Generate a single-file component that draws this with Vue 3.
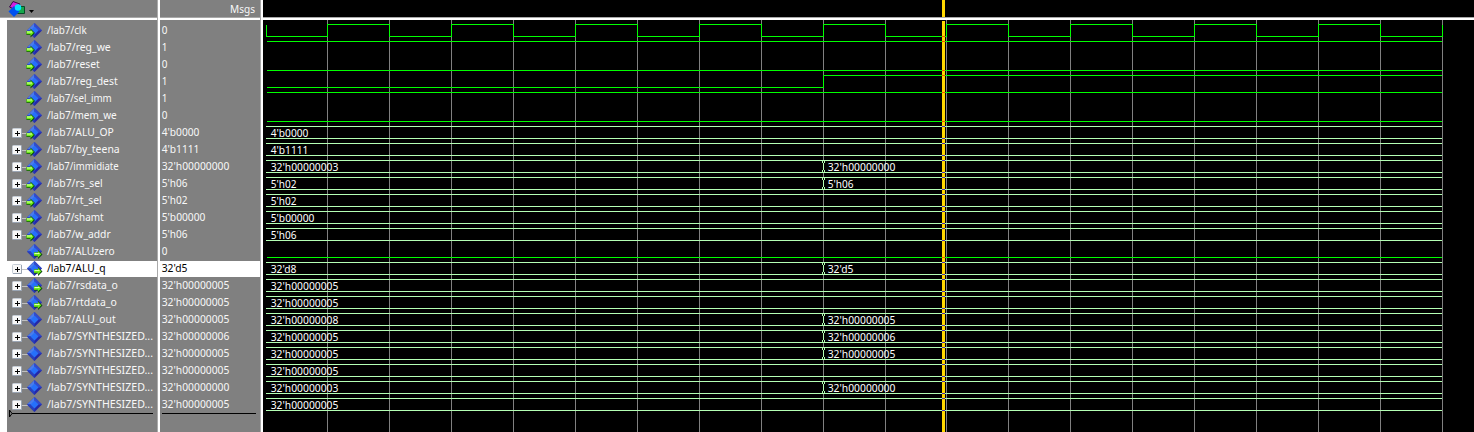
<script setup>
const inputs = [
  ['clk', '0'], ['reg_we', '1'], ['reset', '0'], ['reg_dest', '1'], ['sel_imm', '1'], ['mem_we', '0'],
  ['ALU_OP', "4'b0000"], ['by_teena', "4'b1111"], ['immidiate', "32'h00000000", "32'h00000003"],
  ['rs_sel', "5'h06", "5'h02"], ['rt_sel', "5'h02"], ['shamt', "5'b00000"], ['w_addr', "5'h06"],
].map(([name, value, before]) => ({ name, value, before, kind: 'in' }))
const outputs = [
  ['ALUzero', '0'], ['ALU_q', "32'd5", "32'd8"], ['rsdata_o', "32'h00000005"], ['rtdata_o', "32'h00000005"],
].map(([name, value, before]) => ({ name, value, before, kind: 'out' }))
const internals = [
  ['ALU_out', "32'h00000005", "32'h00000008"],
  ['SYNTHESIZED...', "32'h00000006", "32'h00000005"],
  ['SYNTHESIZED...', "32'h00000005", "32'h00000005"],
  ['SYNTHESIZED...', "32'h00000005"],
  ['SYNTHESIZED...', "32'h00000000", "32'h00000003"],
  ['SYNTHESIZED...', "32'h00000005"],
].map(([name, value, before]) => ({ name, value, before, kind: 'net' }))
const signals = [...inputs, ...outputs, ...internals].map((s, i) => ({
  ...s, path: '/lab7/' + s.name, bus: s.value.length > 1, selected: s.name === 'ALU_q', hi: 4 + 17 * i, lo: 16 + 17 * i,
}))
const buses = signals.filter(s => s.bus)

// Glyph advances in pixels for the 11px interface text.
const advances = {
  2: "'il", 3: '', 4: '/rtfI.', 5: 'ckszyL', 7: 'AUTNHD', 8: 'wmOM',
}
const advance = c => Number(Object.keys(advances).find(k => advances[k].includes(c)) || 6)
const measure = t => [...t].reduce((sum, c) => sum + advance(c), 0) - (t.endsWith('.') ? 2 : 0.3)

const edges = Array.from({ length: 19 }, (_, i) => 64 + i * 62 - (i > 9 ? 1 : 0))
const START = 3
const CHANGE = 560
const CURSOR = 679
const END = 1179
const clock = (() => {
  let d = `M${START + 0.5} 5V16.5`
  edges.forEach((x, i) => { d += `H${x + 0.5}V${i === 18 ? 5 : i % 2 ? 16.5 : 4.5}` })
  return d
})()
const wires = signals.slice(1).filter(s => !s.bus && s.name !== 'reg_dest').map(s => (s.value === '1' ? s.hi : s.lo))
const regDest = `M4 67.5H${CHANGE + 0.5}V55.5H${END}`
const greenCrossings = [16, ...wires, 55]
</script>

<template>
  <main class="viewer">
    <section class="pane names">
      <header class="bar">
        <svg width="40" height="17">
          <path d="M9.500 7L13 1.500L20 4L16 10Z" fill="#d020e0" stroke="#351044" />
          <path d="M17.500 6.500H24.500V13.500H17.500Z" fill="#16a84b" stroke="#084b28" />
          <path d="M8.500 11.500L14 6L19.500 11.500L14 17Z" fill="#0050f0" />
          <circle cx="18" cy="7.500" r="3.200" fill="#00e8ff" />
          <path d="M29 10H34L31.500 13Z" fill="#000" />
        </svg>
      </header>
      <div class="body">
        <div v-for="(s, i) in signals" :key="i" class="row" :class="{ selected: s.selected }">
          <svg width="150" height="17">
            <g v-if="s.bus">
              <path d="M15 9.500H21" class="branch" />
              <rect x="5.500" y="4.500" width="9" height="9" rx="1" fill="#f8f8f8" stroke="#c5ccd5" />
              <path d="M14.500 5V13.500H6" fill="none" stroke="#9aa5b4" />
              <path d="M8 9.500H13M10.500 7V12" stroke="#000" />
            </g>
            <path d="M20 8.500L27.500 1L35 8.500L27.500 16Z" fill="#2427a8" />
            <path d="M20 8.500L27.500 1V8.500Z" fill="#4b7cea" />
            <path d="M27.500 1L35 8.500H27.500Z" fill="#314ccc" />
            <path d="M20 8.500L27.500 16V8.500Z" fill="#2840bd" />
            <path d="M23.500 8.500L27.500 4.500L31.500 8.500L27.500 12.500Z" fill="#2670fa" />
            <g v-if="s.kind !== 'net'" :transform="s.kind === 'out' ? 'translate(7.500 0)' : 'translate(0 -0.500)'">
              <path d="M19.500 9.500H23.500V7L28 11.500L23.500 16V13.500H19.500Z" fill="#0b4b0b" />
              <path d="M19.500 9.500H23.500V8L26.800 11.300L23.500 14.500V12.700H19.500Z" fill="#70ed18" />
              <path d="M20 10.500H25" stroke="#dcffb0" />
            </g>
            <text x="40" y="12" :textLength="measure(s.path)" lengthAdjust="spacingAndGlyphs">{{ s.path }}</text>
          </svg>
        </div>
        <svg class="footer" width="150" height="12">
          <path d="M2.500 2V9L5 5.500Z" fill="none" stroke="#000" />
          <path d="M5 5.500H146" stroke="#000" />
        </svg>
      </div>
    </section>

    <section class="pane values">
      <header class="bar">
        <svg width="100" height="17"><text x="70" y="13" textLength="25" lengthAdjust="spacingAndGlyphs">Msgs</text></svg>
      </header>
      <div class="body">
        <div v-for="(s, i) in signals" :key="i" class="row" :class="{ selected: s.selected }">
          <svg width="100" height="17">
            <text x="1.700" y="12" :textLength="measure(s.value)" lengthAdjust="spacingAndGlyphs">{{ s.value }}</text>
          </svg>
        </div>
        <svg class="footer" width="100" height="12"><path d="M2 5.500H96" stroke="#000" /></svg>
      </div>
    </section>

    <section class="pane waves">
      <header class="bar"><svg width="1211" height="17"><rect :x="CURSOR" width="3" height="17" class="cursor" /></svg></header>
      <svg class="plot" width="1211" height="412">
        <path v-for="x in edges" :key="x" :d="`M${x + 0.5} 0V412`" class="grid" />
        <path :d="clock" class="logic" />
        <path v-for="y in wires" :key="y" :d="`M4 ${y + 0.5}H${END}`" class="logic" />
        <path :d="regDest" class="logic" />
        <g v-for="b in buses" :key="b.hi">
          <path :d="`M${START} ${b.hi + 0.5}H${END}M${START} ${b.lo + 0.5}H${END}`" class="bus" />
          <g v-if="b.before">
            <rect :x="CHANGE - 1" :y="b.hi + 1" width="3" height="11" fill="#000" />
            <path :d="`M${CHANGE - 0.5} ${b.hi}v3M${CHANGE + 1.5} ${b.hi}v3M${CHANGE + 0.5} ${b.hi + 3}v7M${CHANGE - 0.5} ${b.lo + 1}v-3M${CHANGE + 1.5} ${b.lo + 1}v-3`" class="bus" />
            <text :x="CHANGE + 4.700" :y="b.hi + 11" :textLength="measure(b.value)" lengthAdjust="spacingAndGlyphs">{{ b.value }}</text>
          </g>
          <text x="7.700" :y="b.hi + 11" :textLength="measure(b.before || b.value)" lengthAdjust="spacingAndGlyphs">{{ b.before || b.value }}</text>
        </g>
        <rect :x="CURSOR" y="1" width="3" height="411" class="cursor" />
        <rect v-for="y in greenCrossings" :key="'g' + y" :x="CURSOR" :y="y" width="3" height="1" fill="#ff4b00" />
        <template v-for="b in buses" :key="'b' + b.hi">
          <rect :x="CURSOR" :y="b.hi" width="3" height="1" fill="#5030b8" />
          <rect :x="CURSOR" :y="b.lo" width="3" height="1" fill="#5030b8" />
        </template>
      </svg>
    </section>
  </main>
</template>

<style scoped>
.viewer {
  display: grid;
  grid-template-columns: 157px 100px 1211px;
  column-gap: 3px;
  width: 1474px;
  height: 432px;
  overflow: hidden;
  background: linear-gradient(90deg, #fff 157px, #aaa 157px, #aaa 158px, #fff 158px, #fff 260px, #aaa 260px, #aaa 261px, #fff 261px);
}
.pane { display: flex; flex-direction: column; }
.bar {
  height: 17px;
  flex: none;
  background: #808080;
  border-bottom: 1px solid #a8a8a8;
  box-shadow: 0 2px #fff;
  margin-bottom: 2px;
}
.body { flex: 1; background: #808080; padding-top: 2px; }
.names .body { margin-left: 7px; }
.row { height: 17px; }
.row.selected { background: linear-gradient(#808080 1px, #fff 1px); }
.footer { margin-top: -5px; }
svg { display: block; }
text {
  font: 11.5px "Noto Sans", "Open Sans", sans-serif;
  fill: #f8f8f8;
  white-space: pre;
}
.selected text { fill: #000; }
.branch { stroke: #c0c0c0; }
.values { width: 100px; }
.waves .bar, .plot { background: #000; }
.plot { shape-rendering: crispEdges; }
.plot path { fill: none; stroke-width: 1; }
.plot .grid { stroke: #808080; }
.plot .logic { stroke: #00ff00; }
.plot .bus { stroke: #b4ffb4; }
.plot text { fill: #fff; }
.cursor { fill: #ffd800; }
</style>
